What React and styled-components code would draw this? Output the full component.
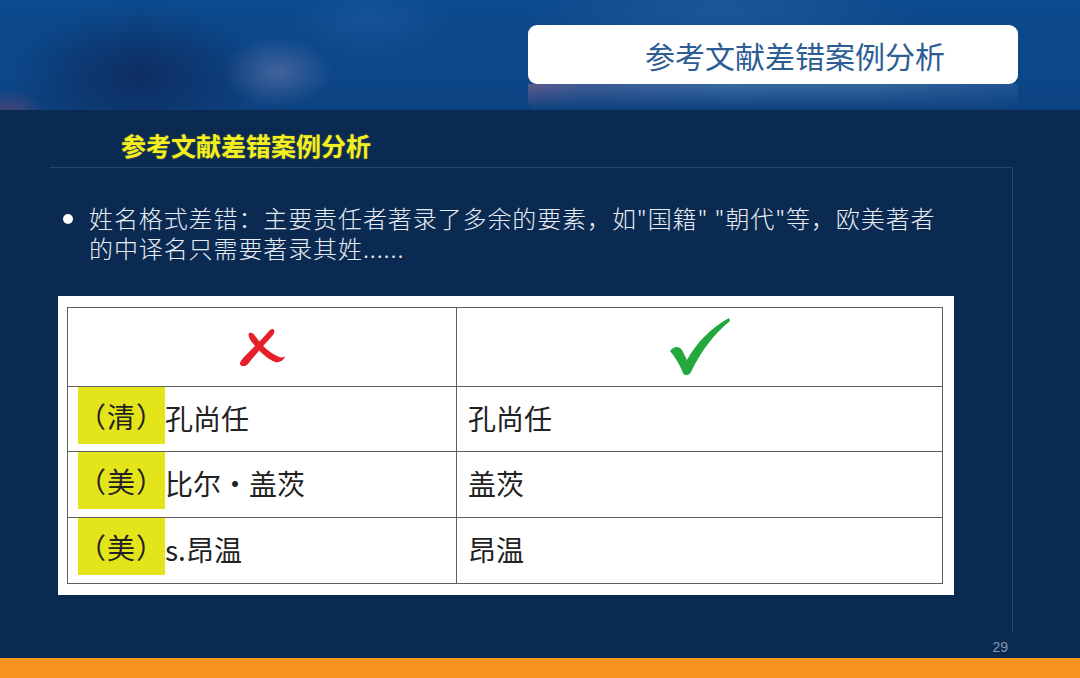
import React from "react";
import styled, { createGlobalStyle } from "styled-components";

const GlobalStyle = createGlobalStyle`
  html, body {
    margin: 0;
    padding: 0;
    background: #0b2a51;
  }
  * {
    box-sizing: border-box;
  }
`;

const CJK = `"Noto Sans CJK SC", "Noto Sans", sans-serif`;

const Slide = styled.div`
  width: 1080px;
  height: 678px;
  display: flex;
  flex-direction: column;
  background: #0b2a51;
  font-family: ${CJK};
  overflow: hidden;
`;

const Header = styled.div`
  height: 110px;
  flex-shrink: 0;
  display: flex;
  justify-content: flex-end;
  align-items: flex-start;
  padding: 25px 62px 0 0;
  background:
    radial-gradient(ellipse 35px 20px at 10px 110px, rgba(150, 70, 110, 0.4), transparent),
    radial-gradient(ellipse 55px 35px at 278px 72px, rgba(120, 125, 175, 0.5), transparent),
    radial-gradient(ellipse 130px 70px at 140px 75px, rgba(14, 36, 84, 0.75), transparent),
    radial-gradient(ellipse 80px 40px at 370px 20px, rgba(40, 100, 170, 0.35), transparent),
    radial-gradient(ellipse 200px 50px at 720px 10px, rgba(60, 110, 175, 0.35), transparent),
    linear-gradient(180deg, #0b4a8d 0%, #0c4788 70%, #0d4280 100%);
`;

const TitleBox = styled.div`
  position: relative;
  width: 490px;
  height: 59px;
  background: #ffffff;
  border-radius: 9px;
  padding-left: 117px;
  display: flex;
  align-items: center;
  font-size: 30px;
  color: #2d5d93;
  white-space: nowrap;

  &::after {
    content: "";
    position: absolute;
    left: 0;
    right: 0;
    top: 59px;
    height: 26px;
    border-radius: 0 0 9px 9px;
    background:
      linear-gradient(90deg, rgba(220, 120, 150, 0.45) 0%, rgba(200, 150, 190, 0.3) 12%, rgba(180, 200, 235, 0.3) 40%, rgba(200, 210, 235, 0.25) 70%, rgba(150, 180, 220, 0.15) 100%);
    -webkit-mask-image: linear-gradient(180deg, rgba(0, 0, 0, 0.9), rgba(0, 0, 0, 0));
    mask-image: linear-gradient(180deg, rgba(0, 0, 0, 0.9), rgba(0, 0, 0, 0));
  }
`;

const Main = styled.div`
  flex: 1;
  display: flex;
  flex-direction: column;
  padding-top: 20px;
`;

const Heading = styled.div`
  height: 30px;
  line-height: 30px;
  margin-left: 121px;
  font-size: 25px;
  font-weight: 700;
  color: #f4ef1e;
  text-shadow: 0 0 2px rgba(240, 230, 40, 0.35);
`;

const Panel = styled.div`
  margin: 7px 0 0 50px;
  width: 963px;
  height: 465px;
  border-top: 1px solid #1f4576;
  border-right: 1px solid #1f4576;
  padding-top: 35px;
`;

const Bullet = styled.div`
  display: flex;
  align-items: flex-start;
  padding-left: 13px;
  color: #e7ecf3;
  font-size: 24px;
  font-weight: 300;
  line-height: 30px;
  letter-spacing: 0.9px;

  &::before {
    content: "";
    flex-shrink: 0;
    width: 10px;
    height: 10px;
    margin-top: 11px;
    margin-right: 16px;
    border-radius: 50%;
    background: #ffffff;
  }
`;

const TableWrap = styled.div`
  margin: 33px 0 0 8px;
  width: 896px;
  height: 299px;
  background: #ffffff;
  padding: 11px 11px 12px 9px;
`;

const Grid = styled.div`
  display: grid;
  grid-template-columns: 388px 485px;
  grid-template-rows: 78px 64px 65px 65px;
  gap: 1px;
  padding: 1px;
  background: #5f5f5f;
`;

const Cell = styled.div`
  background: #ffffff;
  display: flex;
  align-items: ${(p) => (p.$head ? "center" : "flex-start")};
  justify-content: ${(p) => (p.$head ? "center" : "flex-start")};
  padding-left: ${(p) => (p.$head ? 0 : p.$pad)}px;
  font-size: 28px;
  line-height: 58px;
  color: #222222;
  white-space: nowrap;
`;

const Mark = styled.span`
  display: inline-block;
  height: 57px;
  background: #e4e41a;
  letter-spacing: 1px;
`;

const Name = styled.span`
  padding-top: 2px;
`;

const Footer = styled.div`
  height: 26px;
  display: flex;
  justify-content: flex-end;
  align-items: center;
  padding: 4px 72px 0 0;
  font-family: "Liberation Sans", Arial, sans-serif;
  font-size: 14px;
  color: #8396b1;
`;

const OrangeBar = styled.div`
  height: 20px;
  flex-shrink: 0;
  background: #f7941d;
`;

const CrossIcon = () => (
  <svg width="48" height="42" viewBox="0 0 48 42">
    <path
      d="M11 7 C14 6 16 8 18 11 C24 20 32 27 41 31 C44 32 46 31 47 30 C46 34 42 37 37 36 C29 33 20 24 13 15 C11 12 10 9 11 7 Z"
      fill="#e6202b"
    />
    <path
      d="M34 3 C37 3 37 6 35 9 C27 18 18 28 10 38 C7 41 3 41 2 38 C2 35 5 32 9 28 C17 20 26 11 31 5 C32 4 33 3 34 3 Z"
      fill="#e6202b"
    />
  </svg>
);

const CheckIcon = () => (
  <svg width="62" height="60" viewBox="0 0 62 60">
    <path
      d="M1 34 C5 29 10 29 13 33 L18 43 C27 27 40 12 60 1 L61 4 C45 17 32 34 22 55 C20 59 15 59 14 56 C11 48 6 40 1 34 Z"
      fill="#22a83c"
    />
  </svg>
);

const rows = [
  { tag: "（清）", name: "孔尚任", right: "孔尚任" },
  { tag: "（美）", name: "比尔·盖茨", right: "盖茨" },
  { tag: "（美）", name: "s.昂温", right: "昂温" },
];

const App = () => {
  return (
    <Slide>
      <GlobalStyle />
      <Header>
        <TitleBox>参考文献差错案例分析</TitleBox>
      </Header>
      <Main>
        <Heading>参考文献差错案例分析</Heading>
        <Panel>
          <Bullet>
            <span>
              姓名格式差错：主要责任者著录了多余的要素，如"国籍" "朝代"等，欧美著者
              <br />
              的中译名只需要著录其姓......
            </span>
          </Bullet>
          <TableWrap>
            <Grid>
              <Cell $head>
                <CrossIcon />
              </Cell>
              <Cell $head>
                <CheckIcon />
              </Cell>
              {rows.map((r, i) => (
                <React.Fragment key={i}>
                  <Cell $pad={10}>
                    <Mark>{r.tag}</Mark>
                    <Name>{r.name}</Name>
                  </Cell>
                  <Cell $pad={11}>
                    <Name>{r.right}</Name>
                  </Cell>
                </React.Fragment>
              ))}
            </Grid>
          </TableWrap>
        </Panel>
        <Footer>29</Footer>
      </Main>
      <OrangeBar />
    </Slide>
  );
};

export default App;
